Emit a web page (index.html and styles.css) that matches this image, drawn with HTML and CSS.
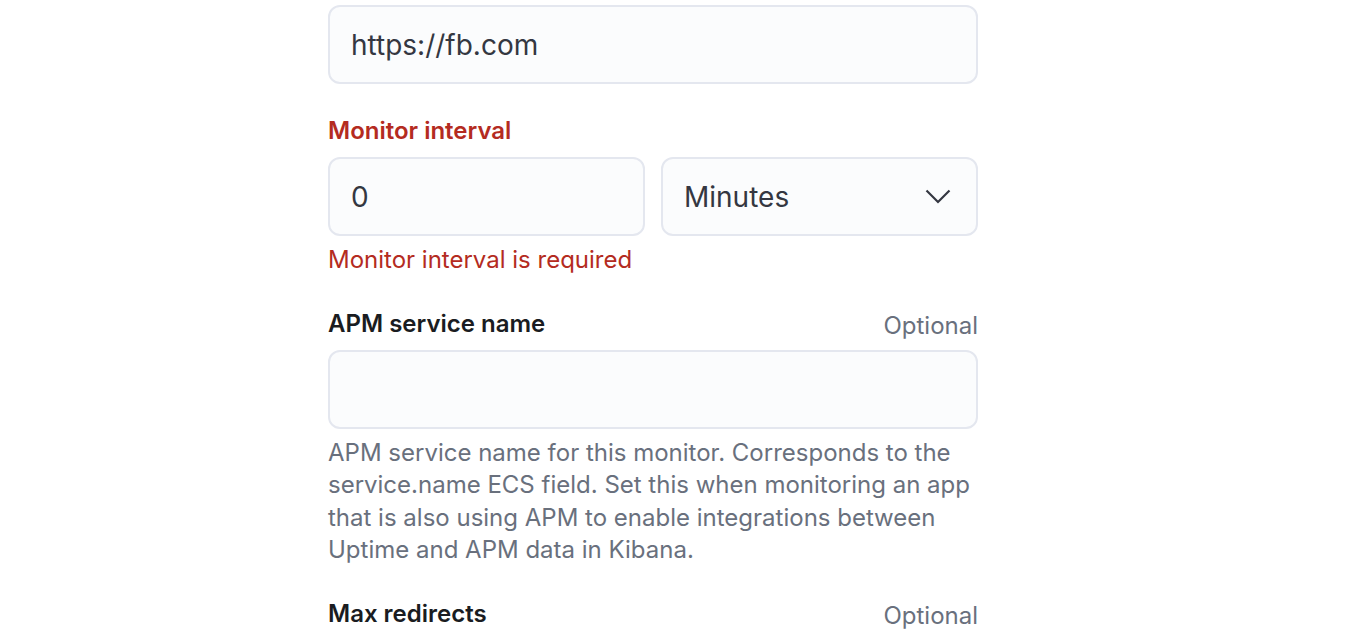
FILE: index.html
```html
<!DOCTYPE html>
<html>
<head>
<meta charset="utf-8">
<link rel="stylesheet" href="styles.css">
</head>
<body>
<div class="form">
  <div class="row first">
    <div class="input"><span class="value">https://fb.com</span></div>
  </div>
  <div class="row">
    <div class="label-line"><span class="label error">Monitor interval</span></div>
    <div class="pair">
      <div class="input"><span class="value">0</span></div>
      <div class="input select"><span class="value">Minutes</span>
        <svg class="chev" width="26" height="15" viewBox="0 0 26 15"><path d="M1.5 1.5 L13 13 L24.5 1.5" fill="none" stroke="#343741" stroke-width="2.2"/></svg>
      </div>
    </div>
    <div class="help error-text">Monitor interval is required</div>
  </div>
  <div class="row">
    <div class="label-line"><span class="label">APM service name</span><span class="optional">Optional</span></div>
    <div class="input"></div>
    <div class="help">APM service name for this monitor. Corresponds to the service.name ECS field. Set this when monitoring an app that is also using APM to enable integrations between Uptime and APM data in Kibana.</div>
  </div>
  <div class="row">
    <div class="label-line"><span class="label">Max redirects</span><span class="optional">Optional</span></div>
  </div>
</div>
</body>
</html>
```
FILE: styles.css
```css
html, body {
  margin: 0;
  padding: 0;
  background: #ffffff;
}
body {
  font-family: Inter, "Noto Sans", sans-serif;
  overflow: hidden;
}
.form {
  width: 650px;
  margin-left: 328px;
  padding-top: 5px;
  display: flex;
  flex-direction: column;
  gap: 32px;
}
.row {
  display: flex;
  flex-direction: column;
}
.label-line {
  display: flex;
  justify-content: space-between;
  align-items: baseline;
  height: 30px;
  line-height: 30px;
  margin-bottom: 11px;
}
.label {
  font-size: 24px;
  font-weight: 600;
  color: #1a1c21;
}
.label.error {
  color: #b42b21;
}
.optional {
  font-size: 24px;
  color: #69707d;
  position: relative;
  top: 2px;
}
.input {
  box-sizing: border-box;
  height: 79px;
  border: 2px solid #e4e7ef;
  border-radius: 12px;
  background: #fbfcfd;
  display: flex;
  align-items: center;
  padding: 0 21px;
  font-size: 28px;
  color: #343741;
}
.pair {
  display: grid;
  grid-template-columns: 1fr 1fr;
  gap: 16px;
}
.select {
  justify-content: space-between;
  padding-right: 25px;
}
.help {
  margin-top: 8px;
  font-size: 24px;
  line-height: 32.5px;
  color: #69707d;
}
.error-text {
  color: #b42b21;
}
```
